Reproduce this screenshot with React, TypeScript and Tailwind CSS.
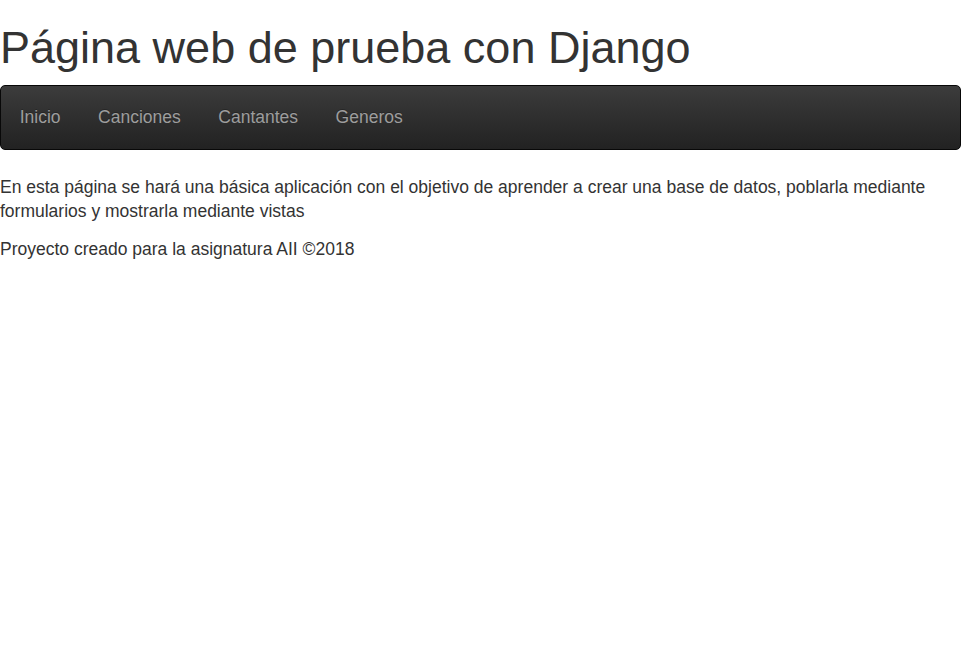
const navItems: string[] = ["Inicio", "Canciones", "Cantantes", "Generos"];

/* APP */
const App = () => {
  return (
    <div className="w-full min-h-screen bg-white text-[#333] font-['Liberation_Sans',Arial,sans-serif]">
      {/* Title */}
      <h1 className="mt-[23px] mb-[12.5px] text-[45px] leading-[49.5px] font-normal">
        Página web de prueba con Django
      </h1>

      {/* Navbar */}
      <nav className="w-[961px] h-[65px] mb-[25px] border border-[#080808] rounded-[5px] bg-linear-to-b from-[#3c3c3c] to-[#222] flex items-center">
        <ul className="flex flex-row">
          {navItems.map((item) => (
            <li key={item}>
              <a
                href="#"
                className="block px-[18.75px] text-[17.5px] leading-[25px] text-[#9d9d9d] [text-shadow:0_-1px_0_rgba(0,0,0,0.25)] hover:text-white">
                {item}
              </a>
            </li>
          ))}
        </ul>
      </nav>

      {/* Content */}
      <p className="mb-[14px] text-[17.5px] leading-[24px]">
        En esta página se hará una básica aplicación con el objetivo de aprender a crear una base de
        datos, poblarla mediante formularios y mostrarla mediante vistas
      </p>
      <p className="mb-[14px] text-[17.5px] leading-[24px]">
        Proyecto creado para la asignatura AII ©2018
      </p>
    </div>
  );
};

export default App;
